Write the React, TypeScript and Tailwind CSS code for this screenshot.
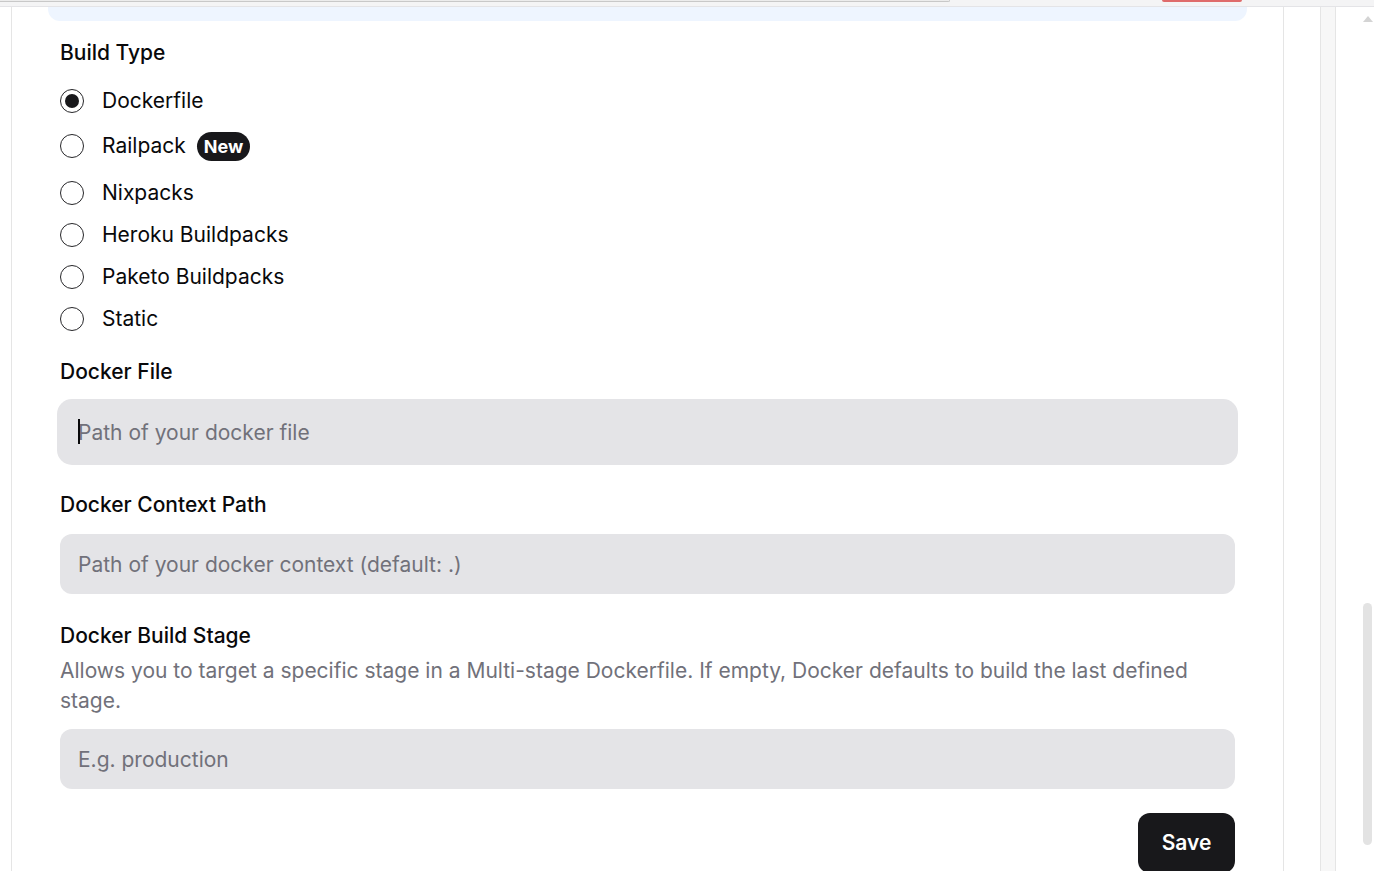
import React from "react";

const options = [
  { label: "Dockerfile", checked: true },
  { label: "Railpack", badge: "New" },
  { label: "Nixpacks" },
  { label: "Heroku Buildpacks" },
  { label: "Paketo Buildpacks" },
  { label: "Static" },
];

function Radio({ checked }: { checked?: boolean }) {
  return (
    <span className="flex h-6 w-6 shrink-0 items-center justify-center rounded-full border-[1.5px] border-[#27272a] bg-white">
      {checked && <span className="h-[14px] w-[14px] rounded-full bg-[#18181b]" />}
    </span>
  );
}

function Field({ placeholder, focused }: { placeholder: string; focused?: boolean }) {
  return (
    <div className="relative">
      <input
        readOnly
        placeholder={placeholder}
        className={
          "h-[60px] w-full rounded-xl bg-[#e4e4e7] px-[18px] text-[21px] text-[#09090b] outline-none placeholder:text-[#71717a] " +
          (focused ? "ring-[3px] ring-[#e4e4e7]" : "")
        }
      />
      {focused && <span className="absolute left-[18px] top-[17px] h-[25px] w-[2px] bg-[#09090b]" />}
    </div>
  );
}

export default function App() {
  return (
    <div className="h-[871px] overflow-hidden bg-white font-['Inter','Noto_Sans',sans-serif] text-[#09090b]">
      <div className="relative h-[7px] border-b border-[#e4e4e7] bg-[#f4f4f5]">
        <div className="absolute left-0 top-0 h-[2px] w-[950px] rounded-br-full border-b border-r border-[#c8c8c8] bg-[#ececec]" />
        <div className="absolute left-[1162px] top-0 h-[2px] w-[80px] rounded-b-sm bg-[#df6b6b]" />
      </div>
      <div className="flex h-[864px]">
        <div className="w-[11px] shrink-0" />
        <div className="w-[1273px] shrink-0 border-x border-[#e5e5e5]">
          <div className="mx-[36px] h-[14px] rounded-b-xl bg-[#eef5ff]" />
          <div className="px-[48px] pt-[18px]">
            <div className="h-[28px] text-[21px] font-medium leading-[28px]">Build Type</div>
            <div className="mt-[19px] flex flex-col gap-[12px]">
              {options.map((o) => (
                <div
                  key={o.label}
                  className={"flex items-center gap-[18px] " + (o.badge ? "mb-[2px] h-[36px]" : "h-[30px]")}
                >
                  <Radio checked={o.checked} />
                  <span className="text-[21px] leading-[30px]">{o.label}</span>
                  {o.badge && (
                    <span className="-ml-[7px] flex h-[29px] items-center rounded-full bg-[#18181b] px-[7px] text-[18px] font-bold text-white">
                      {o.badge}
                    </span>
                  )}
                </div>
              ))}
            </div>

            <div className="mt-[24px] h-[28px] text-[21px] font-medium leading-[28px]">Docker File</div>
            <div className="mt-[16px]">
              <Field placeholder="Path of your docker file" focused />
            </div>

            <div className="mt-[29px] h-[28px] text-[21px] font-medium leading-[28px]">Docker Context Path</div>
            <div className="mt-[15px]">
              <Field placeholder="Path of your docker context (default: .)" />
            </div>

            <div className="mt-[28px] h-[28px] text-[21px] font-medium leading-[28px]">Docker Build Stage</div>
            <p className="mt-[6px] pr-[40px] text-[21px] leading-[30px] text-[#71717a]">
              Allows you to target a specific stage in a Multi-stage Dockerfile. If empty, Docker defaults to build the last defined stage.
            </p>
            <div className="mt-[13px]">
              <Field placeholder="E.g. production" />
            </div>

            <div className="mt-[24px] flex justify-end">
              <button className="h-[60px] w-[97px] rounded-xl bg-[#18181b] text-[21px] font-semibold text-white">
                Save
              </button>
            </div>
          </div>
        </div>
        <div className="w-[36px] shrink-0" />
        <div className="w-[16px] shrink-0 border-x border-[#e5e5e5] bg-[#f7f7f7]" />
        <div className="relative flex-1 rounded-tr-xl">
          <div className="absolute left-[27px] top-[9px] h-0 w-0 border-x-[5px] border-b-[6px] border-x-transparent border-b-[#d4d4d4]" />
          <div className="absolute left-[27px] top-[596px] h-[242px] w-[9px] rounded-full bg-[#e3e3e3]" />
        </div>
      </div>
    </div>
  );
}
